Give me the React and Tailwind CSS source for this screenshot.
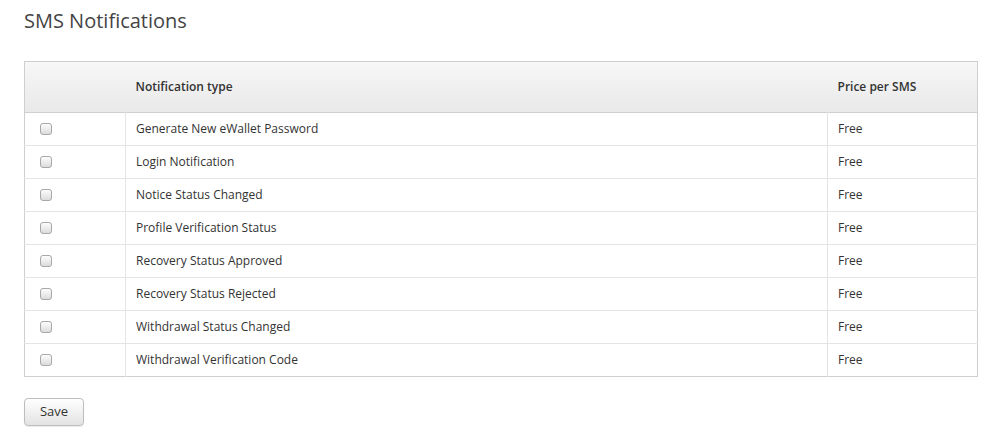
import React from "react";

const types = [
  "Generate New eWallet Password",
  "Login Notification",
  "Notice Status Changed",
  "Profile Verification Status",
  "Recovery Status Approved",
  "Recovery Status Rejected",
  "Withdrawal Status Changed",
  "Withdrawal Verification Code",
];

export default function App() {
  return (
    <div
      className="bg-white min-h-[437px] px-6 pt-[9px] text-[#333]"
      style={{ fontFamily: '"Open Sans", "Liberation Sans", sans-serif' }}
    >
      <h1 className="text-[20px] leading-[24px] text-[#444]">SMS Notifications</h1>

      <table className="mt-[28px] w-[954px] border border-[#cfcfcf] border-collapse text-[12px]">
        <thead>
          <tr className="h-[51px] bg-gradient-to-b from-[#f7f7f7] to-[#e9e9e9] border-b border-[#cfcfcf]">
            <th className="w-[101px]" />
            <th className="text-left font-semibold pl-[10px]">Notification type</th>
            <th className="w-[150px] text-left font-semibold pl-[10px]">Price per SMS</th>
          </tr>
        </thead>
        <tbody>
          {types.map((t) => (
            <tr key={t} className="h-[33px] border-t border-[#e4e4e4]">
              <td className="border-r border-[#e4e4e4] pl-[15px]">
                <span className="block w-[12px] h-[12px] rounded-[3px] border border-[#a8a8a8] bg-gradient-to-b from-[#fdfdfd] to-[#dcdcdc]" />
              </td>
              <td className="pl-[10px] border-r border-[#e4e4e4]">{t}</td>
              <td className="pl-[10px]">Free</td>
            </tr>
          ))}
        </tbody>
      </table>

      <button className="mt-[21px] w-[60px] h-[28px] rounded-[4px] border border-[#bdbdbd] bg-gradient-to-b from-[#ffffff] to-[#e3e3e3] text-[13px] text-[#333] shadow-[0_1px_1px_rgba(0,0,0,0.08)]">
        Save
      </button>
    </div>
  );
}
